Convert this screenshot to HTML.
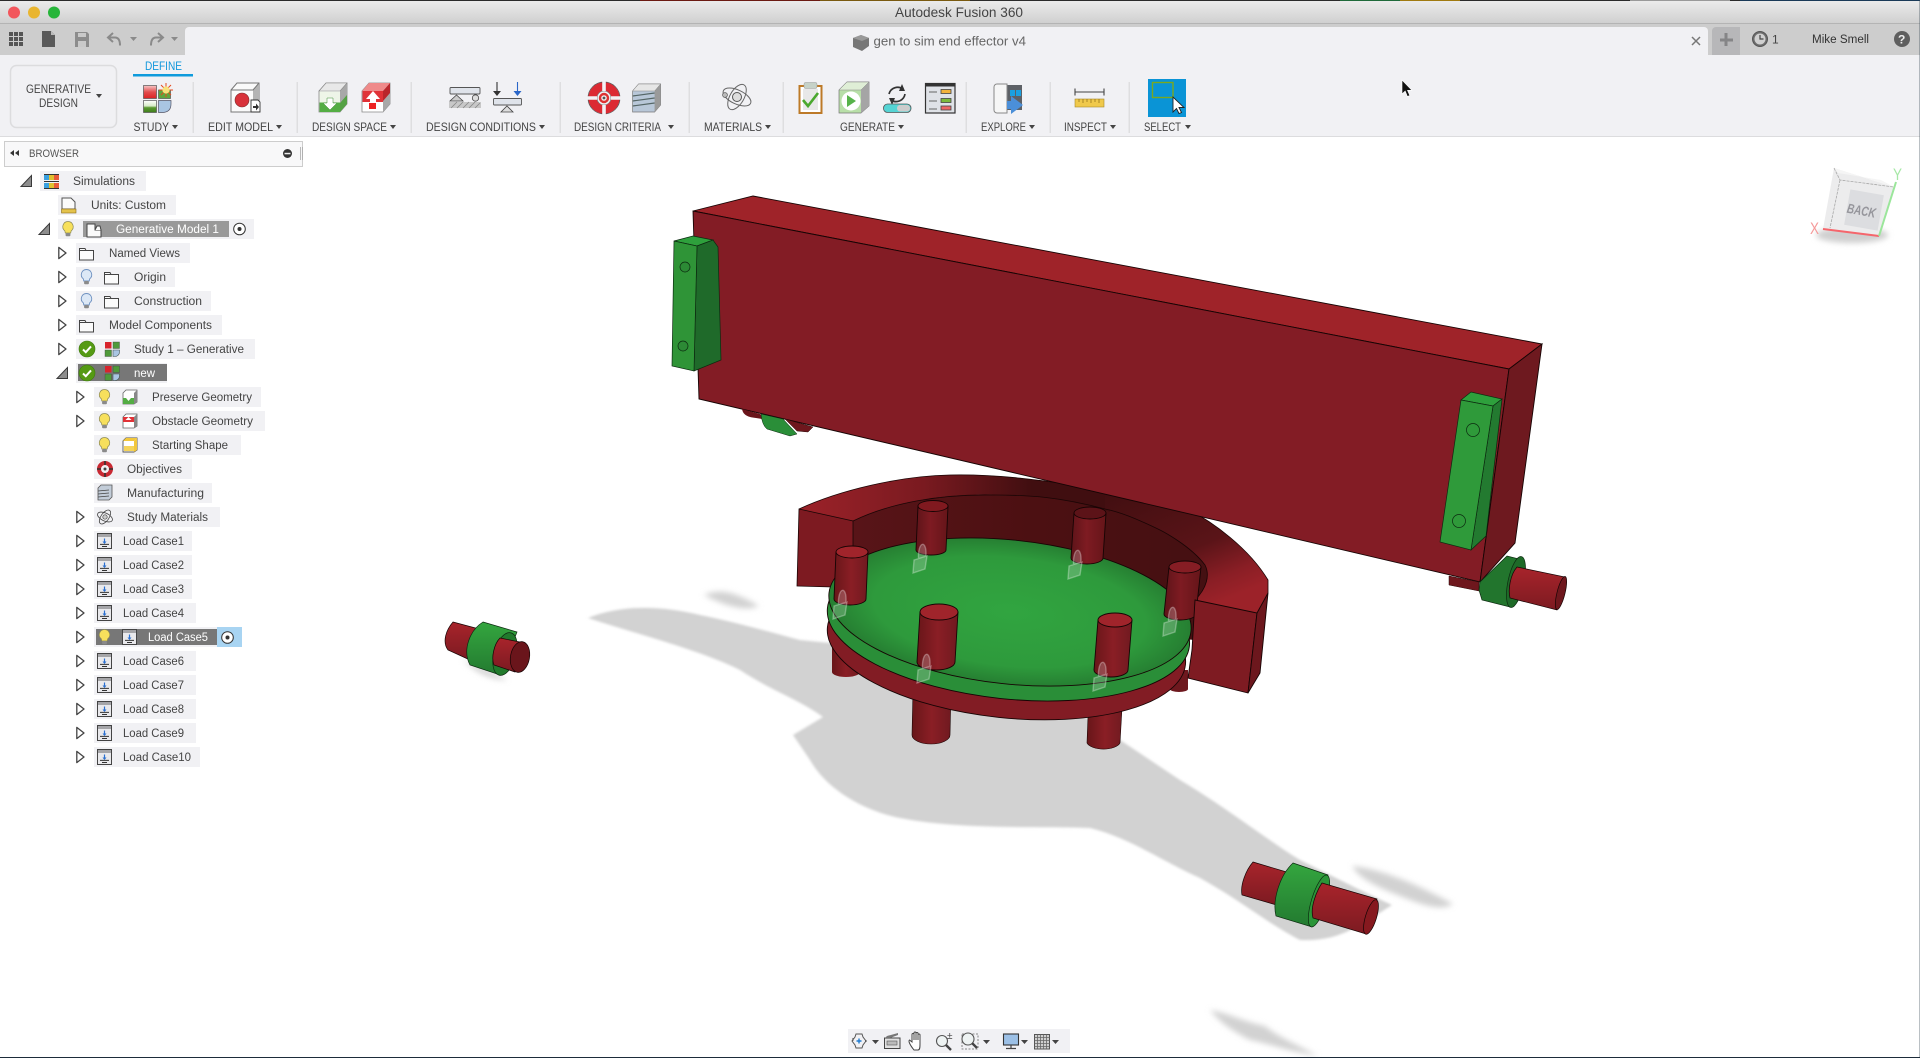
<!DOCTYPE html>
<html lang="en"><head><meta charset="utf-8"><title>Autodesk Fusion 360</title>
<style>
html,body{margin:0;padding:0;background:#fff;overflow:hidden;width:1920px;height:1058px}
svg{display:block}
text{font-family:"Liberation Sans",sans-serif}
.rb{font-size:11.5px;fill:#444}
.tr{font-size:11.5px;fill:#444}
.w{fill:#fff}
</style></head><body>
<svg xmlns="http://www.w3.org/2000/svg" width="1920" height="1058" viewBox="0 0 1920 1058">
<defs>
<linearGradient id="tb" x1="0" y1="0" x2="0" y2="1"><stop offset="0" stop-color="#ececec"/><stop offset="1" stop-color="#d0d0d0"/></linearGradient>
<linearGradient id="pin" x1="0" y1="0" x2="1" y2="0"><stop offset="0" stop-color="#5e1419"/><stop offset=".45" stop-color="#7e1b22"/><stop offset="1" stop-color="#651519"/></linearGradient>
<linearGradient id="pinb" x1="0" y1="0" x2="1" y2="0"><stop offset="0" stop-color="#681619"/><stop offset=".5" stop-color="#8a1e25"/><stop offset="1" stop-color="#701a20"/></linearGradient>
<linearGradient id="ring" x1="0" y1="0" x2="1" y2="0"><stop offset="0" stop-color="#9c2229"/><stop offset=".4" stop-color="#7a1a20"/><stop offset=".75" stop-color="#400e10"/><stop offset="1" stop-color="#400e10"/></linearGradient>
<linearGradient id="ringr" x1="0" y1="0" x2=".55" y2="1"><stop offset="0" stop-color="#400e10"/><stop offset=".6" stop-color="#5a1418"/><stop offset=".85" stop-color="#8a1e25"/><stop offset="1" stop-color="#9c2229"/></linearGradient>
<linearGradient id="wall" x1="0" y1="0" x2="1" y2="0"><stop offset="0" stop-color="#581418"/><stop offset=".5" stop-color="#4c1012"/><stop offset="1" stop-color="#451012"/></linearGradient>
<radialGradient id="disc"><stop offset="0" stop-color="#31a540"/><stop offset=".75" stop-color="#2e9a3c"/><stop offset="1" stop-color="#267f32"/></radialGradient>
<linearGradient id="cyl" x1="0" y1="0" x2="0" y2="1"><stop offset="0" stop-color="#a8242b"/><stop offset="1" stop-color="#7c1a21"/></linearGradient>
<linearGradient id="cylg" x1="0" y1="0" x2="0" y2="1"><stop offset="0" stop-color="#34a63f"/><stop offset="1" stop-color="#237a30"/></linearGradient>
<linearGradient id="redg" x1="0" y1="0" x2="0" y2="1"><stop offset="0" stop-color="#f8c8c8"/><stop offset=".5" stop-color="#e24d4d"/><stop offset="1" stop-color="#d22"/></linearGradient>
<linearGradient id="grng" x1="0" y1="0" x2="0" y2="1"><stop offset="0" stop-color="#fff"/><stop offset=".45" stop-color="#d8ecc8"/><stop offset=".6" stop-color="#5a9a30"/><stop offset="1" stop-color="#3e7c1c"/></linearGradient>
<filter id="b1" x="-5%" y="-5%" width="110%" height="110%"><feGaussianBlur stdDeviation="1.2"/></filter>
<filter id="b3" x="-20%" y="-50%" width="140%" height="200%"><feGaussianBlur stdDeviation="3"/></filter>

<g id="bulb"><path d="M0,-7.5a5.2,5.2 0 0 1 3.2,9.3l-.5,2.2h-5.4l-.5,-2.2A5.2,5.2 0 0 1 0,-7.5z" fill="#f7e05c" stroke="#8d8a55" stroke-width=".7"/><rect x="-2.4" y="4" width="4.8" height="3.2" rx="1" fill="#8a8a8a"/></g>
<g id="bulbb"><path d="M0,-7.5a5.2,5.2 0 0 1 3.2,9.3l-.5,2.2h-5.4l-.5,-2.2A5.2,5.2 0 0 1 0,-7.5z" fill="#dce8f6" stroke="#6d90c0" stroke-width=".9"/><rect x="-2.4" y="4" width="4.8" height="3.2" rx="1" fill="#8a8a8a"/></g>
<path id="folder" d="M.5,-5.5h5.5l1,2h7.5v9.5H.5z M.5,-3.5h6" fill="#fbfbfb" stroke="#444" stroke-width="1"/>
<path id="closed" d="M.8,-5.6L8,0L.8,5.6z" fill="#fff" stroke="#444" stroke-width="1.3" stroke-linejoin="round"/>
<path id="open" d="M10.5,-5.5V5.5H0z" fill="#8e8e8e" stroke="#3a3a3a" stroke-width="1"/>
<g id="lc"><rect x=".5" y="-7.5" width="14" height="15" fill="#e9e9ec" stroke="#444"/><rect x="1" y="-7" width="13" height="3" fill="#a5a5a8"/><path d="M7.5,-2.5V2" stroke="#2a6fd0" stroke-width="1.2"/><path d="M5.5,0.5h4l-2,2.5z" fill="#2a6fd0"/><path d="M3,3.4h9M5,5.5h5" stroke="#333" stroke-width="1"/></g>
<g id="check"><circle r="8" fill="#559a14" stroke="#3f7a10" stroke-width=".6"/><path d="M-4,.5L-1.2,3.2L4,-2.6" fill="none" stroke="#fff" stroke-width="2"/></g>
<g id="study"><rect x="0" y="0" width="6.5" height="6.5" fill="#d8242c"/><rect x="8" y="0" width="6.5" height="6.5" fill="#4f9a3a" stroke="#444" stroke-width=".4"/><rect x="0" y="8" width="6.5" height="6.5" fill="#4f9a3a" stroke="#444" stroke-width=".4"/><path d="M8,8h6.5v2a4.5,4.5 0 0 1-4.5,4.5H8z" fill="#a9c5e2" stroke="#455" stroke-width=".6"/></g>
<path id="lock" d="M-3.5,2C-4.5,-16 5,-18 4,-1M-8,3L5,-1L3,12L-9,16z" fill="#fff" fill-opacity=".2" stroke="#fff" stroke-opacity=".3" stroke-width="1.4"/>
<path id="car" d="M-3,0h6l-3,4z" fill="#444"/>
</defs>

<!-- window chrome -->
<rect width="1920" height="1058" fill="#fff"/>
<rect x="0" y="0" width="1920" height="23" fill="url(#tb)"/>
<rect x="0" y="0" width="1920" height="1" fill="#2a2a2a"/>
<rect x="640" y="0" width="180" height="1" fill="#6b1a12"/><rect x="820" y="0" width="150" height="1" fill="#7a5a10"/><rect x="1340" y="0" width="60" height="1" fill="#1f6a3a"/><rect x="1400" y="0" width="60" height="1" fill="#a07a10"/><rect x="1630" y="0" width="100" height="1" fill="#999"/><rect x="1740" y="0" width="180" height="1" fill="#1a3a58"/>
<rect x="0" y="23" width="1920" height="1" fill="#b4b4b4"/>
<rect x="0" y="24" width="1920" height="31" fill="#cdcdcd"/>
<circle cx="14" cy="12.5" r="6" fill="#f2565c"/><circle cx="34" cy="12.5" r="6" fill="#e9b52f"/><circle cx="54" cy="12.5" r="6" fill="#27b53a"/>
<text x="895" y="17" font-size="13.5" fill="#444" textLength="128" lengthAdjust="spacingAndGlyphs">Autodesk Fusion 360</text>
<path d="M185,55V31a4,4 0 0 1 4,-4H1704a4,4 0 0 1 4,4V55z" fill="#f1f1f4"/>
<path d="M1712,55V31a4,4 0 0 1 4,-4H1740V55z" fill="#b7b7b9"/>
<path d="M1726,33v13M1720,40h13" stroke="#858587" stroke-width="3"/>
<rect x="0" y="55" width="1920" height="81" fill="#f1f1f4"/>
<rect x="0" y="136" width="1920" height="1" fill="#dcdcde"/>
<rect x="1919" y="0" width="1" height="1058" fill="#3a4a55" opacity=".35"/>
<!-- qat -->
<g fill="#555"><rect x="9" y="32" width="4" height="4"/><rect x="14" y="32" width="4" height="4"/><rect x="19" y="32" width="4" height="4"/><rect x="9" y="37" width="4" height="4"/><rect x="14" y="37" width="4" height="4"/><rect x="19" y="37" width="4" height="4"/><rect x="9" y="42" width="4" height="4"/><rect x="14" y="42" width="4" height="4"/><rect x="19" y="42" width="4" height="4"/></g>
<path d="M42,31h9l4,4v12H42z" fill="#5a5a5a"/><path d="M51,31v4h4z" fill="#bbb"/>
<path d="M75,32h12l2,2v13H75z" fill="#8c8c8c"/><rect x="78" y="33" width="8" height="4" fill="#c9c9c9"/><rect x="78" y="41" width="8" height="6" fill="#c9c9c9"/>
<path d="M113,33l-5,4.5l5,4.5M108,37.5h7q5,0 5,8" fill="none" stroke="#8a8a8a" stroke-width="2"/>
<path d="M130,37h7l-3.5,4z" fill="#8a8a8a"/>
<path d="M158,33l5,4.5l-5,4.5M163,37.5h-7q-5,0 -5,8" fill="none" stroke="#8a8a8a" stroke-width="2"/>
<path d="M171,37h7l-3.5,4z" fill="#8a8a8a"/>
<!-- doc -->
<path d="M853,38l8,-3l8,3v8l-7,5l-9,-4z" fill="#777"/><path d="M853,38l9,3l7,-3l-8,-3z" fill="#999"/>
<text x="873.5" y="45.5" font-size="12.5" fill="#666" textLength="152.5" lengthAdjust="spacingAndGlyphs">gen to sim end effector v4</text>
<path d="M1692,37l8,8M1700,37l-8,8" stroke="#777" stroke-width="1.5"/>
<circle cx="1760" cy="39" r="7.5" fill="#6d6d6d" stroke="#555"/><circle cx="1760" cy="39" r="5.5" fill="#d0d0d0"/><path d="M1760,35v4h3.5" fill="none" stroke="#444" stroke-width="1.2"/>
<text x="1772" y="43.5" font-size="12" fill="#444" textLength="6">1</text>
<text x="1812" y="43" font-size="11.5" fill="#333" textLength="57" lengthAdjust="spacingAndGlyphs">Mike Smell</text>
<circle cx="1902" cy="39" r="8" fill="#5f5f5f"/><text x="1898" y="43.5" font-size="12" font-weight="bold" fill="#eee">?</text>

<!-- ribbon -->
<rect x="10.5" y="65.5" width="106" height="62" rx="6" fill="#f1f1f4" stroke="#dcdcde" stroke-width="1.5"/>
<text x="26" y="93" class="rb" textLength="65" lengthAdjust="spacingAndGlyphs">GENERATIVE</text>
<text x="39" y="107" class="rb" textLength="39" lengthAdjust="spacingAndGlyphs">DESIGN</text>
<use href="#car" x="99" y="94"/>
<text x="145" y="70" font-size="11.5" fill="#1197dc" textLength="37" lengthAdjust="spacingAndGlyphs">DEFINE</text>
<rect x="133" y="74" width="60" height="2.5" fill="#0f9bdc"/>
<g fill="#dedee0"><rect x="192.5" y="82" width="1.5" height="51"/><rect x="296.5" y="82" width="1.5" height="51"/><rect x="410.5" y="82" width="1.5" height="51"/><rect x="559.5" y="82" width="1.5" height="51"/><rect x="688.5" y="82" width="1.5" height="51"/><rect x="782.5" y="82" width="1.5" height="51"/><rect x="965.5" y="82" width="1.5" height="51"/><rect x="1049.5" y="82" width="1.5" height="51"/><rect x="1128.5" y="82" width="1.5" height="51"/></g>
<text x="133.5" y="131" class="rb" textLength="35.5" lengthAdjust="spacingAndGlyphs">STUDY</text><use href="#car" x="175" y="125"/>
<text x="208" y="131" class="rb" textLength="65" lengthAdjust="spacingAndGlyphs">EDIT MODEL</text><use href="#car" x="279" y="125"/>
<text x="312" y="131" class="rb" textLength="75" lengthAdjust="spacingAndGlyphs">DESIGN SPACE</text><use href="#car" x="393" y="125"/>
<text x="426" y="131" class="rb" textLength="110" lengthAdjust="spacingAndGlyphs">DESIGN CONDITIONS</text><use href="#car" x="542" y="125"/>
<text x="574" y="131" class="rb" textLength="87" lengthAdjust="spacingAndGlyphs">DESIGN CRITERIA</text><use href="#car" x="671" y="125"/>
<text x="704" y="131" class="rb" textLength="58" lengthAdjust="spacingAndGlyphs">MATERIALS</text><use href="#car" x="768" y="125"/>
<text x="840" y="131" class="rb" textLength="55" lengthAdjust="spacingAndGlyphs">GENERATE</text><use href="#car" x="901" y="125"/>
<text x="981" y="131" class="rb" textLength="45" lengthAdjust="spacingAndGlyphs">EXPLORE</text><use href="#car" x="1032" y="125"/>
<text x="1064" y="131" class="rb" textLength="43" lengthAdjust="spacingAndGlyphs">INSPECT</text><use href="#car" x="1113" y="125"/>
<text x="1144" y="131" class="rb" textLength="37" lengthAdjust="spacingAndGlyphs">SELECT</text><use href="#car" x="1188" y="125"/>

<!-- study icon -->
<rect x="143.5" y="85.5" width="13" height="13" fill="url(#redg)" stroke="#555" stroke-width=".7"/>
<rect x="158.5" y="90" width="12" height="8.5" fill="#5fa53e" stroke="#555" stroke-width=".7"/>
<path d="M166,83v14M159,90h14M161,85l10,10M171,85l-10,10" stroke="#e64b1e" stroke-width="1"/><circle cx="166" cy="90" r="3.6" fill="#f7e27c"/>
<rect x="143.5" y="100.5" width="13" height="12" fill="url(#grng)" stroke="#555" stroke-width=".7"/>
<path d="M158.5,100.5H171V104Q171,112.5 162,112.5H158.5z" fill="#a9c5e2" stroke="#556" stroke-width=".7"/>
<!-- edit model -->
<path d="M231,90l6,-7h22v22l-6,7H231z" fill="#fafafa" stroke="#777"/><path d="M253,90l6,-7v22l-6,7z" fill="#b4b4b4"/><path d="M231,90h22l6,-7" fill="none" stroke="#777"/>
<circle cx="242" cy="100" r="7" fill="#d8323a" stroke="#7a2a2a" stroke-width=".6"/>
<path d="M251,100h7l2,2v10h-9z" fill="#fff" stroke="#333" stroke-width=".9"/><path d="M253,106h3v-2.5l3,3.5l-3,3.5V108h-3z" fill="#333"/>
<!-- design space -->
<path d="M319,91l7,-8h21v21l-7,8H319z" fill="#fff" stroke="#888" stroke-width=".8"/><path d="M340,91l7,-8v21l-7,8z" fill="#a8a8a8"/><path d="M319,91h21l7,-8h-21z" fill="#e8e8e8" stroke="#888" stroke-width=".6"/>
<rect x="319.5" y="102" width="20.5" height="10" fill="#54ad44"/><rect x="319.5" y="91.5" width="20.5" height="11" fill="#eef5e8"/><path d="M340,103l7,-8v9l-7,8z" fill="#54a144"/>
<path d="M327,98h6v5h4l-7,7l-7,-7h4z" fill="#fff" stroke="#3c8c34" stroke-width=".5"/>
<path d="M362,91l7,-8h21v21l-7,8H362z" fill="#fff" stroke="#888" stroke-width=".8"/><path d="M383,91l7,-8v21l-7,8z" fill="#a8a8a8"/><path d="M362,91h21l7,-8h-21z" fill="#ef8a8a"/><rect x="362.5" y="91" width="20.5" height="11" fill="#e03237"/><path d="M383,91l7,-8v10l-7,8z" fill="#b9262b"/>
<path d="M373,91l-7,8h4v4h6v-4h4z" fill="#fff"/><rect x="369" y="103" width="7" height="6" fill="#e22"/>
<!-- conditions -->
<rect x="450" y="87.5" width="30" height="6.5" rx="1" fill="#dfe3ea" stroke="#555" stroke-width=".9"/><path d="M456.5,95l6.5,6h-13z" fill="#ccc" stroke="#444" stroke-width=".8"/><circle cx="475.5" cy="98" r="3.2" fill="#ddd" stroke="#444" stroke-width=".8"/>
<rect x="449" y="102" width="32" height="6" fill="#c8c8c8"/><path d="M451,108l6,-6M457,108l6,-6M463,108l6,-6M469,108l6,-6M475,108l5,-5" stroke="#888" stroke-width=".8"/>
<path d="M497,82v11" stroke="#333" stroke-width="1.1"/><path d="M493,91h8l-4,5z" fill="#333"/><path d="M517.5,82v11" stroke="#2a66c8" stroke-width="1.1"/><path d="M513.5,91h8l-4,5z" fill="#2a66c8"/>
<rect x="493.5" y="98.5" width="28" height="6.5" rx="1" fill="#dfe3ea" stroke="#555" stroke-width=".9"/><path d="M507,106l6,6h-12z" fill="#ddd" stroke="#444" stroke-width=".8"/>
<!-- criteria -->
<circle cx="604" cy="98" r="11.5" fill="none" stroke="#dc2a33" stroke-width="8.5"/><circle cx="604" cy="98" r="16" fill="none" stroke="#555" stroke-width=".7"/><circle cx="604" cy="98" r="7" fill="none" stroke="#666" stroke-width=".6"/>
<path d="M604,81v10M604,105v10M587,98h10M611,98h10" stroke="#f1f1f4" stroke-width="3.6"/><circle cx="604" cy="98" r="4" fill="#eee" stroke="#d33" stroke-width="2.4"/><circle cx="604" cy="98" r="1.4" fill="#555"/>
<path d="M632.6,91l6,-7h22v21l-6,7h-22z" fill="#b8c7d8" stroke="#777" stroke-width=".7"/><path d="M654.6,91l6,-7v21l-6,7z" fill="#9a9a9a"/><path d="M632.6,91h22l6,-7h-22z" fill="#e6e6e6" stroke="#888" stroke-width=".5"/><path d="M632.6,96l22,-3M632.6,101l22,-3M632.6,106l22,-3" stroke="#566" stroke-width="1.2"/>
<!-- materials -->
<g fill="none" stroke="#666" stroke-width="1"><ellipse cx="737" cy="97" rx="15" ry="7" transform="rotate(25 737 97)"/><ellipse cx="737" cy="97" rx="14" ry="7" transform="rotate(-60 737 97)"/></g><circle cx="737" cy="97" r="4.5" fill="#ddd" stroke="#555"/><circle cx="725" cy="95" r="2.4" fill="#bbb" stroke="#555" stroke-width=".7"/>
<!-- clipboard -->
<rect x="799.5" y="86" width="22" height="27" fill="#fff" stroke="#bd7a28" stroke-width="2"/><rect x="803" y="89" width="15" height="21" fill="#e8e8e8"/><rect x="804" y="82.5" width="13" height="6" rx="1.5" fill="#c6d2c8" stroke="#999" stroke-width=".5"/><path d="M803,100l5,6l10,-13" fill="none" stroke="#4aa82e" stroke-width="2.6"/>
<!-- generate box -->
<path d="M839,90l8,-8h22v24l-8,7H839z" fill="#b8dfa8" stroke="#777" stroke-width=".7"/><path d="M861,90l8,-8v24l-8,7z" fill="#a5a5a5"/><path d="M839,90h22l8,-8h-22z" fill="#dfeed6" stroke="#888" stroke-width=".5"/><circle cx="851" cy="101" r="9.5" fill="#fff"/><path d="M847,95l9,6l-9,6z" fill="#57b34a"/>
<!-- refresh -->
<path d="M889,94a9,9 0 0 1 14,-5" fill="none" stroke="#333" stroke-width="1.7"/><path d="M902,84l3,7l-6,0z" fill="#333"/><path d="M905,94a9,9 0 0 1 -14,6" fill="none" stroke="#333" stroke-width="1.7"/><path d="M892,105l-3,-7l6,0z" fill="#333"/><rect x="883.5" y="104" width="27.5" height="8.5" rx="4" fill="#55d4d4" stroke="#555" stroke-width=".8"/><rect x="897" y="105" width="13" height="6.5" rx="3" fill="#ccc"/>
<!-- panel -->
<rect x="925.5" y="83.5" width="29.5" height="29.5" fill="#dfe2e7" stroke="#333" stroke-width="1.2"/><rect x="926" y="84" width="29" height="2.5" fill="#333"/>
<path d="M929,93h8M929,102h8M929,110h8" stroke="#666" stroke-width="1" transform="translate(0,-1)"/><rect x="941" y="89.5" width="10" height="4" fill="#f2b33c" stroke="#444" stroke-width=".8"/><rect x="941" y="98.5" width="10" height="4" fill="#7cbb3c" stroke="#444" stroke-width=".8"/><rect x="941" y="106" width="10" height="4" fill="#e66" stroke="#444" stroke-width=".8"/>
<!-- explore -->
<rect x="1005" y="85" width="17" height="25" fill="#5d6166"/><rect x="1010" y="90" width="5" height="6" fill="#1ba0e0"/><rect x="1016" y="90" width="5" height="6" fill="#1ba0e0"/>
<path d="M994,87a3,3 0 0 1 3,-3h10v29h-10a3,3 0 0 1-3,-3z" fill="#f6f6f6" stroke="#888"/><path d="M1007,101h4v-5l12,9l-12,9v-5h-4z" fill="#4b8fd8"/>
<!-- inspect -->
<path d="M1075,92h29M1075,88.5v7M1104,88.5v7" stroke="#444" stroke-width="1.1" fill="none"/><rect x="1075" y="99" width="29" height="8" fill="#f0c94b" stroke="#a88a2a" stroke-width=".6"/><path d="M1079,99v3M1083,99v4M1087,99v3M1091,99v4M1095,99v3M1099,99v4" stroke="#8a6a18" stroke-width=".7"/>
<!-- select -->
<rect x="1148" y="79" width="38" height="38" fill="#0a94d6"/><rect x="1152.5" y="82.5" width="20.5" height="15" fill="none" stroke="#7aa81e" stroke-width="1.4"/><path d="M1173,97v15l3.5,-3.5l2.5,5l2.5,-1l-2.5,-5h5z" fill="#fff" stroke="#222" stroke-width=".9"/>
<!-- mouse -->
<path d="M1402,80v14l3.2,-3l2.2,5.5l2.4,-1l-2.3,-5.2h4.4z" fill="#111" stroke="#fff" stroke-width=".6"/>

<!-- browser -->
<rect x="4.5" y="141.5" width="298" height="25" fill="#f8f8f9" stroke="#cdcdcd"/>
<path d="M14,150v6l-4,-3zM19,150v6l-4,-3z" fill="#333"/>
<text x="29" y="157" font-size="11" fill="#555" textLength="50" lengthAdjust="spacingAndGlyphs">BROWSER</text>
<circle cx="287.5" cy="153.5" r="4.5" fill="#333"/><rect x="284.5" y="152.8" width="6" height="1.5" fill="#eee"/><path d="M300.5,147v13M302.5,147v13" stroke="#aaa" stroke-width=".8"/>

<!-- rows -->
<g fill="#f1f1f4">
<rect x="40" y="171" width="106" height="20"/><rect x="58" y="195" width="118" height="20"/><rect x="58" y="219" width="196" height="20"/><rect x="76" y="243" width="114" height="20"/><rect x="76" y="267" width="99" height="20"/><rect x="76" y="291" width="135" height="20"/><rect x="76" y="315" width="146" height="20"/><rect x="76" y="339" width="179" height="20"/><rect x="76" y="363" width="91" height="20"/><rect x="94" y="387" width="167" height="20"/><rect x="94" y="411" width="171" height="20"/><rect x="94" y="435" width="147" height="20"/><rect x="94" y="459" width="98" height="20"/><rect x="94" y="483" width="118" height="20"/><rect x="94" y="507" width="126" height="20"/><rect x="94" y="531" width="98" height="20"/><rect x="94" y="555" width="98" height="20"/><rect x="94" y="579" width="98" height="20"/><rect x="94" y="603" width="102" height="20"/><rect x="94" y="627" width="148" height="20"/><rect x="94" y="651" width="102" height="20"/><rect x="94" y="675" width="102" height="20"/><rect x="94" y="699" width="102" height="20"/><rect x="94" y="723" width="102" height="20"/><rect x="94" y="747" width="106" height="20"/>
</g>
<rect x="83" y="221" width="146" height="16" fill="#999"/>
<rect x="78" y="364" width="89" height="17" fill="#777"/>
<rect x="96" y="629" width="121" height="16" fill="#777"/>
<rect x="217" y="627" width="25" height="20" fill="#a8d4f2"/>

<use href="#open" x="21" y="181"/><use href="#open" x="39" y="229"/><use href="#open" x="57" y="373"/>
<use href="#closed" x="58" y="253"/><use href="#closed" x="58" y="277"/><use href="#closed" x="58" y="301"/><use href="#closed" x="58" y="325"/><use href="#closed" x="58" y="349"/>
<use href="#closed" x="76" y="397"/><use href="#closed" x="76" y="421"/><use href="#closed" x="76" y="517"/><use href="#closed" x="76" y="541"/><use href="#closed" x="76" y="565"/><use href="#closed" x="76" y="589"/><use href="#closed" x="76" y="613"/><use href="#closed" x="76" y="637"/><use href="#closed" x="76" y="661"/><use href="#closed" x="76" y="685"/><use href="#closed" x="76" y="709"/><use href="#closed" x="76" y="733"/><use href="#closed" x="76" y="757"/>

<!-- row icons -->
<rect x="44" y="175" width="15" height="5" fill="#e85a3a"/><rect x="44" y="175" width="5" height="5" fill="#3aa0e0"/><rect x="49" y="175" width="5" height="5" fill="#e0c030"/>
<rect x="44" y="183" width="15" height="5" fill="#e85a3a"/><rect x="44" y="183" width="5" height="5" fill="#3aa0e0"/><rect x="49" y="183" width="5" height="5" fill="#e0c030"/>
<path d="M44,174.5h15M44,181.5h15M44,188.5h15" stroke="#333" stroke-width="1"/>
<path d="M62,198h9l4,4v7H62z" fill="#fbfbfb" stroke="#555"/><rect x="61.5" y="209" width="14.5" height="4" fill="#e4c34c" stroke="#8a6a18" stroke-width=".6"/>
<use href="#bulb" x="68" y="229"/>
<path d="M87,224h8v6h6v7H87z" fill="#fafafa" stroke="#444"/><path d="M95,230l2,-4h3l1,4" fill="#fafafa" stroke="#444"/>
<use href="#folder" x="79" y="254"/>
<use href="#bulbb" x="86.5" y="277"/><use href="#folder" x="104" y="278"/>
<use href="#bulbb" x="86.5" y="301"/><use href="#folder" x="104" y="302"/>
<use href="#folder" x="79" y="326"/>
<use href="#check" x="87" y="349"/><use href="#study" x="105" y="342"/>
<use href="#check" x="87" y="373"/><use href="#study" x="105" y="366"/>
<use href="#bulb" x="104.5" y="397"/>
<path d="M123,393l3,-3h11v12l-3,2H123z" fill="#fff" stroke="#666" stroke-width=".8"/><rect x="123" y="398" width="11" height="6" fill="#54ad44"/><path d="M134,393l3,-3v12l-3,2z" fill="#888"/><path d="M126,398h5l-2.5,3z" fill="#fff"/>
<use href="#bulb" x="104.5" y="421"/>
<path d="M123,417l3,-3h11v12l-3,2H123z" fill="#fff" stroke="#666" stroke-width=".8"/><rect x="123" y="417" width="11" height="5" fill="#e03237"/><path d="M134,417l3,-3v12l-3,2z" fill="#888"/><path d="M128.5,417l-3,3h6z" fill="#fff"/>
<use href="#bulb" x="104.5" y="445"/>
<path d="M123,441l3,-3h11v12l-3,2H123z" fill="#fff" stroke="#555" stroke-width=".9"/><path d="M123,441l3,-3h11l-3,3z" fill="#f2c73c"/><path d="M134,441l3,-3v12l-3,2z" fill="#f2c73c"/><rect x="124" y="446" width="10" height="5" fill="#f5d45a"/>
<circle cx="105" cy="469" r="6" fill="none" stroke="#c82832" stroke-width="4"/><path d="M105,461v4M105,473v4M97,469h4M109,469h4" stroke="#333" stroke-width="1.6"/><circle cx="105" cy="469" r="1.5" fill="#444"/>
<path d="M98,488l3,-3h11v12l-3,3H98z" fill="#c2ccd8" stroke="#555" stroke-width=".8"/><path d="M98,491l11,-1M98,494l11,-1M98,497l11,-1" stroke="#444" stroke-width=".8"/>
<g fill="none" stroke="#444" stroke-width=".8"><ellipse cx="105" cy="517" rx="8" ry="4" transform="rotate(25 105 517)"/><ellipse cx="105" cy="517" rx="8" ry="4" transform="rotate(-55 105 517)"/></g><circle cx="105" cy="517" r="2.2" fill="#ccc" stroke="#444" stroke-width=".7"/>
<use href="#lc" x="97" y="541"/><use href="#lc" x="97" y="565"/><use href="#lc" x="97" y="589"/><use href="#lc" x="97" y="613"/><use href="#lc" x="97" y="661"/><use href="#lc" x="97" y="685"/><use href="#lc" x="97" y="709"/><use href="#lc" x="97" y="733"/><use href="#lc" x="97" y="757"/>
<use href="#bulb" x="104.5" y="637"/><use href="#lc" x="122" y="637"/>
<g><circle cx="239.5" cy="229" r="5.8" fill="#fff" stroke="#333"/><circle cx="239.5" cy="229" r="2" fill="#333"/></g>
<g><circle cx="227.5" cy="637.5" r="5.8" fill="#fff" stroke="#333"/><circle cx="227.5" cy="637.5" r="2" fill="#333"/></g>

<!-- row text -->
<text x="73" y="185" class="tr" textLength="62" lengthAdjust="spacingAndGlyphs">Simulations</text>
<text x="91" y="209" class="tr" textLength="75" lengthAdjust="spacingAndGlyphs">Units: Custom</text>
<text x="116" y="233" class="tr w" textLength="103" lengthAdjust="spacingAndGlyphs">Generative Model 1</text>
<text x="109" y="257" class="tr" textLength="71" lengthAdjust="spacingAndGlyphs">Named Views</text>
<text x="134" y="281" class="tr" textLength="32" lengthAdjust="spacingAndGlyphs">Origin</text>
<text x="134" y="305" class="tr" textLength="68" lengthAdjust="spacingAndGlyphs">Construction</text>
<text x="109" y="329" class="tr" textLength="103" lengthAdjust="spacingAndGlyphs">Model Components</text>
<text x="134" y="353" class="tr" textLength="110" lengthAdjust="spacingAndGlyphs">Study 1 – Generative</text>
<text x="134" y="377" class="tr w" textLength="21" lengthAdjust="spacingAndGlyphs">new</text>
<text x="152" y="401" class="tr" textLength="100" lengthAdjust="spacingAndGlyphs">Preserve Geometry</text>
<text x="152" y="425" class="tr" textLength="101" lengthAdjust="spacingAndGlyphs">Obstacle Geometry</text>
<text x="152" y="449" class="tr" textLength="76" lengthAdjust="spacingAndGlyphs">Starting Shape</text>
<text x="127" y="473" class="tr" textLength="55" lengthAdjust="spacingAndGlyphs">Objectives</text>
<text x="127" y="497" class="tr" textLength="77" lengthAdjust="spacingAndGlyphs">Manufacturing</text>
<text x="127" y="521" class="tr" textLength="81" lengthAdjust="spacingAndGlyphs">Study Materials</text>
<text x="123" y="545" class="tr" textLength="61" lengthAdjust="spacingAndGlyphs">Load Case1</text>
<text x="123" y="569" class="tr" textLength="61" lengthAdjust="spacingAndGlyphs">Load Case2</text>
<text x="123" y="593" class="tr" textLength="61" lengthAdjust="spacingAndGlyphs">Load Case3</text>
<text x="123" y="617" class="tr" textLength="61" lengthAdjust="spacingAndGlyphs">Load Case4</text>
<text x="148" y="641" class="tr w" textLength="60" lengthAdjust="spacingAndGlyphs">Load Case5</text>
<text x="123" y="665" class="tr" textLength="61" lengthAdjust="spacingAndGlyphs">Load Case6</text>
<text x="123" y="689" class="tr" textLength="61" lengthAdjust="spacingAndGlyphs">Load Case7</text>
<text x="123" y="713" class="tr" textLength="61" lengthAdjust="spacingAndGlyphs">Load Case8</text>
<text x="123" y="737" class="tr" textLength="61" lengthAdjust="spacingAndGlyphs">Load Case9</text>
<text x="123" y="761" class="tr" textLength="68" lengthAdjust="spacingAndGlyphs">Load Case10</text>

<!-- shadows -->
<g fill="#d2d2d2">
<path filter="url(#b1)" d="M588,618C620,605 660,605 700,615C735,622 770,632 800,640L1000,660L1180,780C1230,810 1260,835 1300,860C1340,880 1370,895 1392,905C1360,925 1340,942 1300,940C1270,925 1240,900 1200,878C1160,860 1130,838 1090,828C1040,826 960,830 900,818C860,810 825,787 810,760L793,735L823,717C800,700 770,690 740,670C700,650 640,635 588,618z"/>
<path filter="url(#b3)" d="M704,595C720,588 735,592 759,606C745,612 725,606 704,595z"/>
<path filter="url(#b3)" d="M1352,866C1375,868 1410,880 1453,904C1440,912 1420,904 1400,896C1380,888 1360,880 1352,866z"/>
<path filter="url(#b3)" d="M1210,1010C1225,1012 1245,1022 1265,1026C1280,1038 1300,1046 1318,1056C1290,1052 1270,1044 1250,1040C1230,1030 1220,1022 1210,1010z"/>
<path filter="url(#b3)" d="M463,660C475,665 495,672 507,680C490,680 475,672 463,660z"/>
</g>

<!-- ring back -->
<path d="M853,521C890,503 940,494 993,495C1060,495 1120,505 1170,525C1200,540 1215,560 1210,585L1195,640L853,610z" fill="url(#wall)"/>
<path d="M799,509C840,490 900,476 950,475C1000,474 1040,480 1110,490L1110,512C1060,497 1030,495 993,495C940,494 890,503 853,521z" fill="url(#ring)"/>
<path d="M1105,488L1180,505C1215,522 1250,550 1268,580L1268,593L1257,613L1195,600C1207,588 1210,575 1205,565C1190,545 1160,530 1160,530C1135,518 1120,512 1105,509z" fill="url(#ringr)"/>
<path d="M799,509C840,490 900,476 950,475C1000,474 1040,480 1110,490L1180,505C1215,522 1250,550 1268,580L1268,593" fill="none" stroke="#1a0505" stroke-width=".8"/>
<path d="M853,521C890,503 940,494 993,495C1030,495 1060,497 1105,509C1120,512 1135,518 1160,530C1160,530 1190,545 1205,565C1210,575 1207,588 1195,600" fill="none" stroke="#1a0505" stroke-width=".8"/>
<path d="M799,509L853,521L853,560L833,587L797,586z" fill="#7d1a21" stroke="#1a0505" stroke-width=".8"/>

<!-- lower pins -->
<path d="M832,640V672A14,5 0 0 0 860,672V640z" fill="url(#pinb)"/>
<path d="M1170,670V689A9,3 0 0 0 1188,689V670z" fill="#6e181e"/>
<path d="M913,690L912,735A19,9 0 0 0 950,735L951,690z" fill="url(#pinb)" stroke="#1a0505" stroke-width=".6"/>
<path d="M1089,690L1087,743A17,8 0 0 0 1120,743L1123,690z" fill="url(#pinb)" stroke="#1a0505" stroke-width=".6"/>

<!-- discs -->
<g transform="rotate(6 1010 612)" stroke="#160404" stroke-width=".9">
<ellipse cx="1010" cy="646" rx="180" ry="72" fill="#821c24"/>
<ellipse cx="1010" cy="627" rx="182" ry="72" fill="#2a8e38"/>
<ellipse cx="1010" cy="612" rx="182" ry="72" fill="url(#disc)"/>
</g>

<!-- pins -->
<g stroke="#160404" stroke-width=".9">
<path d="M918,506L916,550A15,5 0 0 0 946,550L948,506z" fill="url(#pin)"/><ellipse cx="933" cy="506" rx="15" ry="5.5" fill="#80191f"/>
<path d="M1074,513L1071,558A16,6 0 0 0 1103,558L1106,513z" fill="url(#pin)"/><ellipse cx="1090" cy="513" rx="16" ry="6" fill="#5c1318"/>
<path d="M836,552L834,599A16,6 0 0 0 866,599L868,552z" fill="url(#pinb)"/><ellipse cx="852" cy="552" rx="16" ry="6" fill="#a0242b"/>
<path d="M1169,567L1164,614A16,6 0 0 0 1196,614L1201,567z" fill="url(#pin)"/><ellipse cx="1185" cy="567" rx="16" ry="6" fill="#861d24"/>
<path d="M920,612L917,662A19,8 0 0 0 955,662L958,612z" fill="url(#pinb)"/><ellipse cx="939" cy="612" rx="19" ry="8" fill="#a0242b"/>
<path d="M1098,620L1094,670A17,7 0 0 0 1128,670L1132,620z" fill="url(#pinb)"/><ellipse cx="1115" cy="620" rx="17" ry="7" fill="#a0242b"/>
</g>
<use href="#lock" x="922" y="557"/><use href="#lock" x="1077" y="563"/><use href="#lock" x="842" y="603"/><use href="#lock" x="1172" y="620"/><use href="#lock" x="926" y="667"/><use href="#lock" x="1102" y="675"/>

<!-- ring right end -->
<path d="M1195,600L1257,613L1248,693L1188,678L1192,650z" fill="#7e1b22" stroke="#160404" stroke-width=".9"/>
<path d="M1257,613L1268,593L1260,673L1248,693z" fill="#6c171d" stroke="#160404" stroke-width=".9"/>

<!-- beam -->
<path d="M693,211L753,196L1542,344L1509,369z" fill="#9f2329" stroke="#160404" stroke-width=".9"/>
<path d="M693,211L1509,369L1480,582L699,399z" fill="#831c25" stroke="#160404" stroke-width=".9"/>
<path d="M1509,369L1542,344L1515,543L1480,582z" fill="#6e191f" stroke="#160404" stroke-width=".9"/>
<!-- under beam left -->
<path d="M742,409L760,414L768,420L756,418C746,417 743,414 742,409z" fill="#6a151b"/>
<path d="M785,419L813,427L808,432L797,431z" fill="#6e171d" stroke="#2a0808" stroke-width=".5"/>
<path d="M761,414L783,419L797,434L790,436L767,429Q762,425 761,414z" fill="#2a8e38" stroke="#0c2a10" stroke-width=".5"/>
<!-- left block -->
<path d="M674,241L693,236L713,240L697,246z" fill="#2ea03c" stroke="#0c2a10" stroke-width=".7"/>
<path d="M697,246L713,240L718,247L721,360L694,371z" fill="#1f6a2a" stroke="#0c2a10" stroke-width=".7"/>
<path d="M674,241L697,246L694,371L672,366z" fill="#2f9437" stroke="#0c2a10" stroke-width=".7"/>
<circle cx="685" cy="267" r="5" fill="#2c8a35" stroke="#0c2a10" stroke-width=".7"/><circle cx="683" cy="346" r="5" fill="#2c8a35" stroke="#0c2a10" stroke-width=".7"/>
<!-- right block -->
<path d="M1461,400L1471,392L1502,399L1493,406z" fill="#2ea03c" stroke="#0c2a10" stroke-width=".7"/>
<path d="M1493,406L1502,399L1486,536L1471,550z" fill="#237a30" stroke="#0c2a10" stroke-width=".7"/>
<path d="M1461,400L1493,406L1471,550L1440,542z" fill="#2f9a3a" stroke="#0c2a10" stroke-width=".7"/>
<circle cx="1473" cy="430" r="6.5" fill="#2f9a3a" stroke="#0c2a10" stroke-width=".7"/><circle cx="1459" cy="521" r="6.5" fill="#2f9a3a" stroke="#0c2a10" stroke-width=".7"/>
<!-- right connector -->
<path d="M1449,576V585L1479,591V582z" fill="#6e171d" stroke="#2a0808" stroke-width=".5"/>
<path d="M1480,582L1507,556L1523,560L1520,590L1510,607L1482,600L1479,590z" fill="#22752d" stroke="#0c2a10" stroke-width=".7"/>
<ellipse cx="1516" cy="582" rx="8" ry="26" transform="rotate(12 1516 582)" fill="#1e6a28" stroke="#0c2a10" stroke-width=".7"/>
<path d="M1517,567L1565,577L1557,610L1510,598C1508,590 1510,575 1517,567z" fill="url(#cyl)" stroke="#160404" stroke-width=".7"/>
<ellipse cx="1561" cy="593" rx="4" ry="17" transform="rotate(14 1561 593)" fill="#6e171d" stroke="#160404" stroke-width=".7"/>
<!-- left connector -->
<path d="M453,622L483,630L470,660L448,650C442,642 446,630 453,622z" fill="url(#cyl)" stroke="#160404" stroke-width=".7"/>
<path d="M483,622L517,632L500,675L470,665C462,650 470,630 483,622z" fill="url(#cylg)" stroke="#0c2a10" stroke-width=".7"/>
<ellipse cx="505" cy="654" rx="11" ry="22" transform="rotate(16 505 654)" fill="#217a2c" stroke="#0c2a10" stroke-width=".7"/>
<path d="M500,638L520,642L515,672L494,665C491,658 494,644 500,638z" fill="url(#cyl)" stroke="#160404" stroke-width=".7"/>
<ellipse cx="520" cy="657" rx="9.5" ry="15.5" transform="rotate(10 520 657)" fill="#6a151b" stroke="#160404" stroke-width=".7"/>
<!-- bottom connector -->
<path d="M1253,862L1290,873L1280,906L1242,895C1240,885 1246,870 1253,862z" fill="url(#cyl)" stroke="#160404" stroke-width=".7"/>
<path d="M1293,863L1328,875L1312,927L1276,916C1272,900 1280,875 1293,863z" fill="url(#cylg)" stroke="#0c2a10" stroke-width=".7"/>
<ellipse cx="1319" cy="901" rx="7.5" ry="27" transform="rotate(17 1319 901)" fill="#2a9538" stroke="#0c2a10" stroke-width=".7"/>
<path d="M1322,883L1377,899L1366,934L1313,918C1310,908 1316,892 1322,883z" fill="url(#cyl)" stroke="#160404" stroke-width=".7"/>
<ellipse cx="1371" cy="917" rx="5.5" ry="18" transform="rotate(17 1371 917)" fill="#86191f" stroke="#160404" stroke-width=".7"/>

<!-- viewcube -->
<ellipse cx="1852" cy="235" rx="36" ry="8" fill="#cfcfcf" filter="url(#b3)"/>
<path d="M1834,168L1894,187L1879,236L1823,229z" fill="#ececed"/>
<path d="M1834,168L1894,187L1881,180L1838,173z" fill="#f5f5f5"/>
<path d="M1834,168L1840,180L1894,187M1840,180L1830,228" fill="none" stroke="#a8a8a8" stroke-width=".8" stroke-dasharray="3 1"/>
<rect x="1847" y="192" width="34" height="36" transform="rotate(10 1864 210)" fill="#dcdde0"/>
<text x="1847" y="215" font-size="13.5" font-style="italic" fill="#96969c" font-weight="bold" transform="rotate(10 1860 210)" textLength="29" lengthAdjust="spacingAndGlyphs">BACK</text>
<path d="M1823,229L1879,236" stroke="#f5666c" stroke-width="2"/><path d="M1879,236L1896,182" stroke="#9be69b" stroke-width="2"/>
<text x="1810" y="234" font-size="17" fill="#f59a9a" textLength="9" lengthAdjust="spacingAndGlyphs">X</text><text x="1893" y="180" font-size="17" fill="#a6e8a6" textLength="9" lengthAdjust="spacingAndGlyphs">Y</text>

<!-- nav bar -->
<rect x="848" y="1029" width="222" height="24" fill="#f1f1f4"/>
<rect x="0" y="1057" width="1920" height="1" fill="#1d2c3a"/>
<g fill="none" stroke="#555" stroke-width="1">
<path d="M856,1034h6l1,3l3,4l-3,4l-1,3h-6l-1,-3l-3,-4l3,-4z"/><path d="M853,1041a2,4 0 0 1 0,-3M865,1041h2"/>
</g><path d="M856.5,1041h5M859,1038.5v5" stroke="#1e7ad0" stroke-width="1.4"/>
<path d="M872,1040h7l-3.5,4z" fill="#444"/>
<rect x="884.5" y="1038" width="15.5" height="10.5" fill="#e0e0e0" stroke="#444"/><rect x="887" y="1041" width="10" height="4" fill="#bbb" stroke="#555" stroke-width=".6"/><path d="M885,1038l2,-2l11,-3v2l-8,3z" fill="#777"/>
<path d="M914,1050C910,1045 908,1041 909.5,1040L912,1042V1034.5a1,1 0 0 1 2,0V1040V1033a1,1 0 0 1 2,0V1040V1033.5a1,1 0 0 1 2,0V1040V1035a1,1 0 0 1 2,0V1044C920,1047 920,1050 918,1050z" fill="#fff" stroke="#444" stroke-width="1"/>
<circle cx="942" cy="1041" r="5.5" fill="#eef3f3" stroke="#555" stroke-width="1.1"/><path d="M946,1045l5,5" stroke="#444" stroke-width="2.4"/><text x="947" y="1039" font-size="10" fill="#444">±</text>
<rect x="962" y="1034" width="16" height="15" fill="none" stroke="#666" stroke-width=".8" stroke-dasharray="2 1.5"/><circle cx="968" cy="1039" r="6" fill="#eef3f3" stroke="#555" stroke-width="1.1"/><path d="M972,1043l5,5" stroke="#444" stroke-width="2.4"/>
<path d="M983,1040h7l-3.5,4z" fill="#444"/>
<rect x="1003.5" y="1034" width="15" height="11" fill="#9cc0e6" stroke="#333" stroke-width="1.1"/><path d="M1011,1045v3M1006,1048.5h10" stroke="#444" stroke-width="1.2"/>
<path d="M1021,1040h7l-3.5,4z" fill="#444"/>
<rect x="1034.5" y="1034.5" width="15" height="14.5" fill="#cfcfcf" stroke="#555"/><path d="M1037.5,1034.5v14.5M1040.5,1034.5v14.5M1043.5,1034.5v14.5M1046.5,1034.5v14.5M1034.5,1037.5h15M1034.5,1040.5h15M1034.5,1043.5h15M1034.5,1046.5h15" stroke="#666" stroke-width=".8"/>
<path d="M1052,1040h7l-3.5,4z" fill="#444"/>
</svg>
</body></html>
